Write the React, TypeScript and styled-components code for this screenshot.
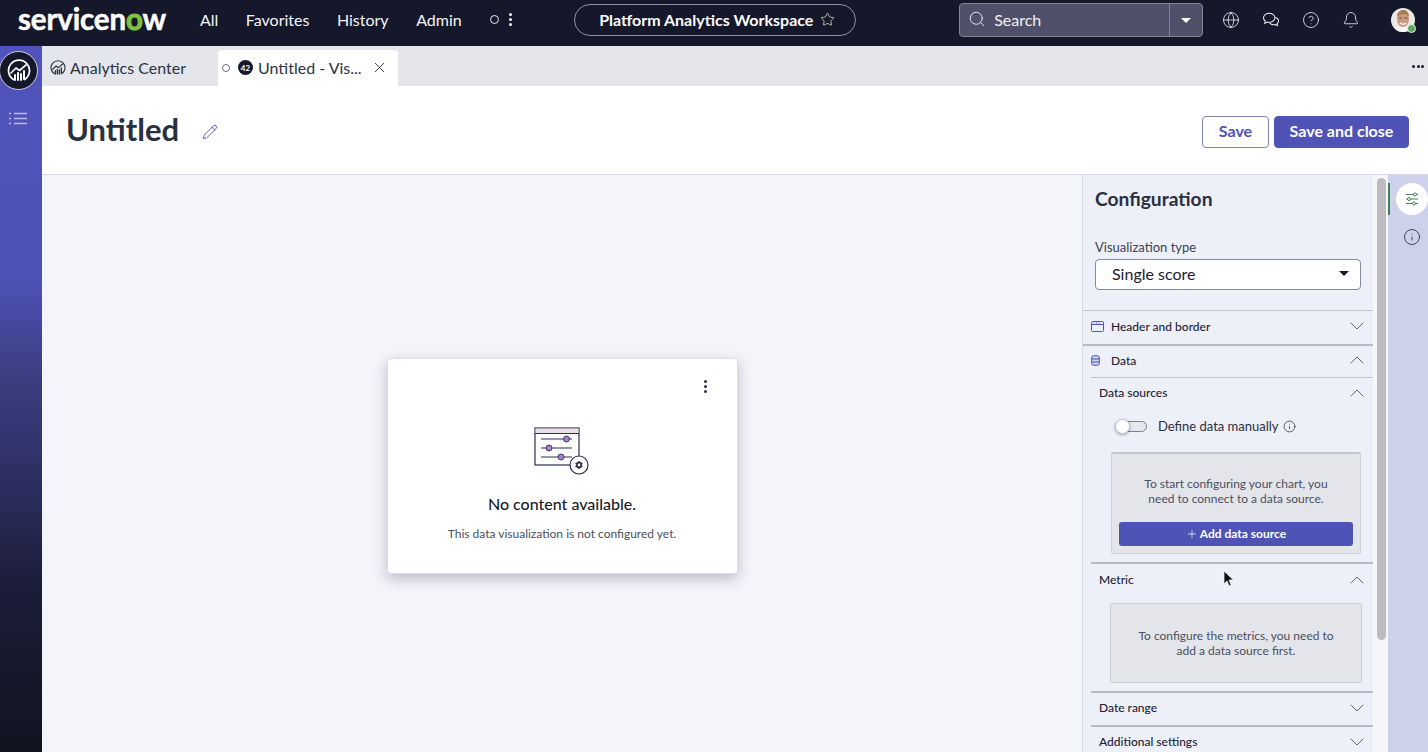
import React from "react";
import styled, { createGlobalStyle } from "styled-components";
import { Search, Globe, CircleHelp, Bell, Star, Pencil, X, ChevronDown, ChevronUp, Info, Plus } from "lucide-react";

const Global = createGlobalStyle`
  html, body { margin: 0; padding: 0; height: 752px; overflow: hidden; }
  body { font-family: Lato, "Open Sans", sans-serif; color: #1c2030; }
  #root { height: 752px; }
  * { box-sizing: border-box; }
`;

const Page = styled.div`
  position: relative;
  width: 1428px;
  height: 752px;
  display: flex;
  flex-direction: column;
  overflow: hidden;
`;

const TopBar = styled.header`
  flex: 0 0 46px;
  height: 46px;
  background: #15172a;
  display: flex;
  align-items: center;
  color: #fff;
`;

const Logo = styled.div`
  margin-left: 18px;
  width: 149px;
  font-size: 29.5px;
  font-weight: 700;
  line-height: 38px;
  letter-spacing: -0.15px;
  color: #fff;
  white-space: nowrap;
  margin-top: -9px;
  -webkit-text-stroke: 0.5px currentColor;
`;
const LogoO = styled.span`
  color: #7ec242;
  -webkit-text-stroke: 1px #7ec242;
`;

const Nav = styled.nav`
  margin-left: 33px;
  display: flex;
  align-items: center;
  gap: 27.5px;
  font-size: 16px;
  margin-top: -7px;
`;
const NavItem = styled.span`
  color: #f4f4f6;
`;
const Ring = styled.span`
  width: 9px;
  height: 9px;
  border: 1.2px solid #eee;
  border-radius: 50%;
`;
const Kebab = styled.span<{ $c: string }>`
  display: flex;
  flex-direction: column;
  gap: 2px;
  & > i {
    width: 3px;
    height: 3px;
    border-radius: 50%;
    background: ${(p) => p.$c};
  }
`;
const NavMore = styled.span`
  display: flex;
  align-items: center;
  gap: 10px;
  margin-left: 1px;
`;

const Pill = styled.div`
  margin-left: 62px;
  width: 282px;
  height: 32px;
  border: 1px solid #8f91a0;
  border-radius: 16px;
  display: flex;
  align-items: center;
  padding: 0 0 2px 24px;
  gap: 7px;
  font-size: 16px;
  font-weight: 700;
  margin-top: -6px;
  color: #fbfbfb;
`;

const SearchBox = styled.div`
  margin-left: 103px;
  width: 244px;
  height: 34px;
  margin-top: -6px;
  background: #50506a;
  border: 1px solid #83849a;
  border-radius: 4px;
  display: flex;
  align-items: center;
  font-size: 16px;
  color: #f0f0f3;
`;
const SearchField = styled.div`
  flex: 1;
  height: 100%;
  display: flex;
  align-items: center;
  gap: 8px;
  padding: 0 0 2px 8px;
  border-right: 1px solid #83849a;
`;
const SearchCaret = styled.div`
  width: 32px;
  display: flex;
  justify-content: center;
`;
const CaretDown = styled.span<{ $w: number; $c: string }>`
  width: 0;
  height: 0;
  border-left: ${(p) => p.$w}px solid transparent;
  border-right: ${(p) => p.$w}px solid transparent;
  border-top: ${(p) => p.$w}px solid ${(p) => p.$c};
`;

const TopIcons = styled.div`
  margin-left: 19px;
  display: flex;
  align-items: center;
  gap: 22px;
  margin-top: -6px;
  color: #eceef2;
`;
const Avatar = styled.div`
  position: relative;
  width: 24px;
  height: 24px;
  margin-left: 31px;
  margin-top: -6px;
`;
const Presence = styled.span`
  position: absolute;
  right: -1px;
  bottom: -1px;
  width: 9px;
  height: 9px;
  border-radius: 50%;
  background: #5ba85a;
  border: 1px solid #e8efe4;
`;

const Body = styled.div`
  flex: 1;
  display: flex;
  min-height: 0;
`;
const Sidebar = styled.aside`
  flex: 0 0 42px;
  background: linear-gradient(180deg, #4f53bb 0%, #4f53b8 32%, #3b3d80 47%, #2a2c5c 64%, #1c1d3a 76%, #12131f 100%);
  position: relative;
  display: flex;
  flex-direction: column;
  align-items: center;
`;
const AppBadge = styled.div`
  position: absolute;
  left: -1px;
  top: 5px;
  width: 39px;
  height: 39px;
  border-radius: 50%;
  background: #15172a;
  border: 1px solid #cfd0e0;
  display: flex;
  align-items: center;
  justify-content: center;
`;
const MenuList = styled.div`
  margin-top: 66px;
  margin-left: -6px;
  line-height: 0;
`;

const Main = styled.main`
  flex: 1;
  display: flex;
  flex-direction: column;
  min-width: 0;
`;
const Tabs = styled.div`
  flex: 0 0 40px;
  background: #e4e6ec;
  display: flex;
  align-items: flex-end;
  font-size: 16px;
`;
const TabHome = styled.div`
  width: 176px;
  height: 36px;
  padding: 0 0 1px 8px;
  display: flex;
  align-items: center;
  gap: 4px;
  color: #2c3242;
`;
const TabActive = styled.div`
  width: 180px;
  height: 36px;
  background: #fff;
  border-radius: 4px 4px 0 0;
  padding: 0 0 1px 4px;
  display: flex;
  align-items: center;
  color: #2c3242;
`;
const TabRing = styled.span`
  width: 8px;
  height: 8px;
  border: 1px solid #666b7a;
  border-radius: 50%;
  margin-right: 8px;
`;
const TabBadge = styled.span`
  width: 15px;
  height: 15px;
  border-radius: 50%;
  background: #15172a;
  color: #fff;
  font-size: 8px;
  font-weight: 700;
  display: flex;
  align-items: center;
  justify-content: center;
  margin-right: 5px;
`;
const TabClose = styled.span`
  margin-left: 9px;
  display: flex;
  color: #2c3242;
`;
const TabsEnd = styled.div`
  margin-left: auto;
  height: 100%;
  display: flex;
  align-items: center;
  padding-right: 4px;
`;
const KebabRow = styled.span`
  display: flex;
  gap: 1.5px;
  & > i {
    width: 3px;
    height: 3px;
    border-radius: 50%;
    background: #15172a;
  }
`;

const TitleBar = styled.div`
  flex: 0 0 89px;
  background: #fff;
  border-bottom: 1px solid #d9dbe8;
  display: flex;
  align-items: center;
  padding: 0 19px 0 24px;
`;
const Title = styled.h1`
  margin: -2px 0 0;
  font-size: 31px;
  font-weight: 700;
  color: #293042;
  line-height: 40px;
`;
const EditIcon = styled.span`
  display: flex;
  margin-left: 23px;
  color: #4e53b5;
  margin-top: 3px;
`;
const Actions = styled.div`
  margin-left: auto;
  display: flex;
  gap: 5px;
  margin-top: 3px;
`;
const Btn = styled.button<{ $primary?: boolean }>`
  height: 32px;
  border-radius: 4px;
  font-family: inherit;
  font-size: 16px;
  font-weight: 700;
  padding: 0 0 2px;
  width: ${(p) => (p.$primary ? "135px" : "67px")};
  background: ${(p) => (p.$primary ? "#4e53b5" : "#fff")};
  color: ${(p) => (p.$primary ? "#fff" : "#4e53b5")};
  border: 1px solid ${(p) => (p.$primary ? "#4e53b5" : "#8486ad")};
`;

const Work = styled.div`
  flex: 1;
  display: flex;
  min-height: 0;
`;
const Canvas = styled.section`
  flex: 0 0 1040px;
  background: #f4f5fa;
  display: flex;
  justify-content: center;
  padding-top: 183px;
`;
const Card = styled.div`
  position: relative;
  width: 351px;
  height: 216px;
  background: #fff;
  border: 1px solid #dcdde6;
  border-radius: 4px;
  box-shadow: 0 5px 14px rgba(40, 44, 70, 0.28);
  display: flex;
  flex-direction: column;
  align-items: center;
  padding-top: 68px;
`;
const CardMenu = styled.div`
  position: absolute;
  right: 30px;
  top: 21px;
`;
const CardTitle = styled.div`
  margin-top: 17px;
  font-size: 16px;
  line-height: 22px;
  font-weight: 500;
  color: #191c2a;
`;
const CardText = styled.div`
  margin-top: 10px;
  font-size: 12px;
  line-height: 18px;
  color: #4a4f60;
`;

const Config = styled.section`
  flex: 0 0 291px;
  background: #edeff9;
  border-left: 1px solid #d6d8e2;
  overflow: hidden;
`;
const ConfigTitle = styled.h2`
  margin: 0;
  padding: 10px 0 0 12px;
  font-size: 19.2px;
  line-height: 28px;
  font-weight: 700;
  color: #293042;
`;
const FieldLabel = styled.div`
  margin: 26px 0 0 12px;
  font-size: 13px;
  line-height: 17px;
  color: #3d4253;
`;
const Select = styled.div`
  margin: 3px 0 0 12px;
  width: 266px;
  height: 31px;
  background: #fff;
  border: 1px solid #878a98;
  border-radius: 4px;
  display: flex;
  align-items: center;
  justify-content: space-between;
  padding: 0 11px 2px 16px;
  font-size: 16px;
  color: #1c2030;
`;
const Row = styled.div<{ $indent?: boolean; $heavy?: boolean; $h?: number; $first?: boolean; $pb?: number }>`
  height: ${(p) => p.$h ?? 34}px;
  display: flex;
  align-items: center;
  margin-left: ${(p) => (p.$indent ? 8 : 0)}px;
  padding: 0 4px ${(p) => p.$pb ?? 3}px 8px;
  border-top: ${(p) => (p.$heavy ? "2px solid #b7bac6" : "1px solid #c2c5d0")};
  font-size: 12px;
  color: #1f2333;
  font-weight: 500;
  margin-top: ${(p) => (p.$first ? 20 : 0)}px;
  white-space: nowrap;
`;
const RowIcon = styled.span`
  width: 20px;
  display: flex;
  color: #5154b4;
`;
const RowChevron = styled.span`
  margin-left: auto;
  display: flex;
  color: #3c4050;
`;
const ToggleRow = styled.div`
  height: 28px;
  margin: 2px 0 0 32px;
  display: flex;
  align-items: center;
  font-size: 13px;
  color: #2a2e3e;
  gap: 4px;
`;
const Toggle = styled.span`
  position: relative;
  width: 32px;
  height: 11px;
  border: 1px solid #7c7f8e;
  border-radius: 6px;
  background: #e6e8f0;
  margin-right: 7px;
`;
const Knob = styled.span`
  position: absolute;
  left: -1px;
  top: -3px;
  width: 15px;
  height: 15px;
  border-radius: 50%;
  background: #fff;
  border: 1px solid #c6c8d2;
  box-shadow: 0 1px 3px rgba(0, 0, 0, 0.35);
`;
const EmptyBox = styled.div<{ $h: number; $x: number; $w: number; $mt: number; $pt: number; $strong?: boolean }>`
  height: ${(p) => p.$h}px;
  width: ${(p) => p.$w}px;
  margin: ${(p) => p.$mt}px 0 0 ${(p) => p.$x}px;
  padding-top: ${(p) => p.$pt}px;
  background: #e4e5ea;
  border: 1px solid #cfd1d8;
  border-top: ${(p) => (p.$strong ? "2px solid #c3c5ce" : "1px solid #cfd1d8")};
  border-radius: 2px;
  text-align: center;
  font-size: 12px;
  line-height: 15px;
  color: #4a4f60;
`;
const AddBtn = styled.div`
  margin: 16px 7px 0;
  height: 24px;
  border-radius: 3px;
  background: #4e53b5;
  color: #fff;
  font-size: 12px;
  font-weight: 700;
  display: flex;
  align-items: center;
  justify-content: center;
  gap: 2px;
  padding-bottom: 1px;
`;
const Spacer = styled.div<{ $h: number }>`
  height: ${(p) => p.$h}px;
`;

const ScrollTrack = styled.div`
  flex: 0 0 15px;
  background: #f6f6f9;
  padding: 3px 2px 0 4px;
`;
const ScrollThumb = styled.div`
  height: 462px;
  border-radius: 5px;
  background: #bcbcc0;
`;

const Rail = styled.aside`
  flex: 1;
  background: #cdd1ea;
  position: relative;
  display: flex;
  flex-direction: column;
  align-items: center;
  padding-top: 8px;
  gap: 9px;
  color: #2a2e3e;
`;
const RailMark = styled.span`
  position: absolute;
  left: 0;
  top: 8px;
  width: 2px;
  height: 32px;
  background: #3f7f5c;
`;
const RailActive = styled.span`
  width: 32px;
  height: 32px;
  border-radius: 50%;
  background: #fff;
  margin-left: 8px;
  display: flex;
  align-items: center;
  justify-content: center;
  color: #3f8a52;
`;
const RailIcon = styled.span`
  display: flex;
  margin-left: 8px;
  margin-top: 4px;
`;
const Cursor = styled.svg`
  position: absolute;
  left: 1223px;
  top: 570px;
`;

const Dots = ({ c }: { c: string }) => (
  <Kebab $c={c}>
    <i />
    <i />
    <i />
  </Kebab>
);

const AnalyticsGlyph = ({ size, color }: { size: number; color: string }) => (
  <svg width={size} height={size} viewBox="0 0 24 24" fill="none" stroke={color} strokeWidth="1.7" strokeLinecap="round" strokeLinejoin="round">
    <path d="M6.5 20.5A10.5 10.5 0 1 1 17.5 20.5" />
    <path d="M4 14l5-5 3.5 2.5L19 6" />
    <path d="M8 21v-5M11 21v-7M14 21v-6M17 20v-8" strokeWidth="2" />
  </svg>
);

const ChatGlyph = () => (
  <svg width="18" height="18" viewBox="0 0 16 16" fill="none" stroke="currentColor" strokeWidth="0.9">
    <path d="M6.5 2C3.6 2 1.3 3.700 1.300 6c0 1.200.6 2.200 1.600 2.900L2.400 11l2.400-1.200c.6.2 1.100.2 1.700.2 2.800 0 5-1.800 5-4s-2.200-4-5-4z" />
    <path d="M11.800 5.800c1.700.4 2.900 1.600 2.900 3 0 1-.5 1.800-1.300 2.400l.4 1.800-2-1c-.5.1-1 .2-1.500.2-1.600 0-3-.8-3.600-2" />
  </svg>
);

const FaceGlyph = () => (
  <svg width="24" height="24" viewBox="0 0 24 24">
    <defs>
      <clipPath id="faceClip">
        <circle cx="12" cy="12" r="12" />
      </clipPath>
    </defs>
    <g clipPath="url(#faceClip)">
      <rect width="24" height="24" fill="#ece9e3" />
      <path d="M2 24c1-5 5-6 10-6s9 1 10 6z" fill="#f7f7f5" />
      <ellipse cx="12" cy="11.500" rx="6" ry="7.500" fill="#c99a80" />
      <path d="M6 9c0-5 3-7 6.500-7S18 5 18 8.500c-2-2-3-2.500-5.500-2.500S8 7 6 9z" fill="#a67c52" />
      <path d="M8 10h3M13.500 10h3" stroke="#5a4030" strokeWidth="0.9" />
      <path d="M9 15c2 1.500 4.500 1.500 6 0" stroke="#fff" strokeWidth="1.200" fill="none" />
    </g>
  </svg>
);

const ListGlyph = () => (
  <svg width="18" height="13" viewBox="0 0 18 13" fill="none" stroke="#b9bce8" strokeWidth="1.400">
    <path d="M5 1.500h13M5 6.500h13M5 11.500h13" />
    <path d="M0 1.500h2M0 6.500h2M0 11.500h2" />
  </svg>
);

const SlidersGlyph = () => (
  <svg width="16" height="16" viewBox="0 0 16 16" fill="none" stroke="currentColor" strokeWidth="1">
    <path d="M2 3.500h7.500M12.500 3.500H14M2 8h1.500M6.500 8H14M2 12.500h6.500M11.500 12.500H14" />
    <circle cx="11" cy="3.500" r="1.500" />
    <circle cx="5" cy="8" r="1.500" />
    <circle cx="10" cy="12.500" r="1.500" />
  </svg>
);

const HeaderGlyph = () => (
  <svg width="13" height="11" viewBox="0 0 13 11" fill="none" stroke="currentColor" strokeWidth="1">
    <rect x="0.500" y="0.500" width="12" height="10" rx="1" />
    <path d="M0.500 3.500h12M2.500 2h1M5 2h1M7.500 2h1" />
  </svg>
);

const DbGlyph = () => (
  <svg width="9" height="11" viewBox="0 0 9 11" fill="#cfd0ee" stroke="currentColor" strokeWidth="1">
    <rect x="0.700" y="0.700" width="7.600" height="9.600" rx="2" />
    <path d="M0.700 4h7.600M0.700 7h7.600" />
  </svg>
);

const EmptyIllustration = () => (
  <svg width="56" height="49" viewBox="0 0 56 49" fill="none">
    <rect x="1" y="1" width="44" height="37" fill="#fff" stroke="#2d3050" strokeWidth="1.200" />
    <rect x="1.600" y="1.600" width="42.800" height="4.500" fill="#eadfe6" />
    <path d="M1 6.500h44" stroke="#2d3050" />
    <path d="M7 12h31M7 21h31M7 30h31" stroke="#2d3050" strokeWidth="1.200" />
    <g fill="#a97fd0" stroke="#2d3050" strokeWidth="0.900">
      <circle cx="32.500" cy="12" r="3" />
      <circle cx="15" cy="21" r="3" />
      <circle cx="27" cy="30" r="3" />
    </g>
    <circle cx="45" cy="38" r="9" fill="#fff" stroke="#2d3050" strokeWidth="1.200" />
    <circle cx="45" cy="38" r="2.300" fill="none" stroke="#2d3050" strokeWidth="1.800" />
    <path d="M45 34v1M45 41v1M41.500 36l.9.500M47.600 39.500l.9.500M41.500 40l.9-.500M47.600 36.500l.9-.500" stroke="#2d3050" strokeWidth="1.400" />
  </svg>
);

const Chev = ({ up }: { up?: boolean }) => (
  <RowChevron>{up ? <ChevronUp size={24} strokeWidth={0.8} /> : <ChevronDown size={24} strokeWidth={0.8} />}</RowChevron>
);

export default function App() {
  return (
    <Page>
      <Global />
      <TopBar>
        <Logo>
          servicen<LogoO>o</LogoO>w
        </Logo>
        <Nav>
          <NavItem>All</NavItem>
          <NavItem>Favorites</NavItem>
          <NavItem>History</NavItem>
          <NavItem>Admin</NavItem>
          <NavMore>
            <Ring />
            <Dots c="#f4f4f6" />
          </NavMore>
        </Nav>
        <Pill>
          Platform Analytics Workspace
          <Star size={15} strokeWidth={1.200} color="#f0e6d2" />
        </Pill>
        <SearchBox>
          <SearchField>
            <Search size={18} strokeWidth={1.200} />
            Search
          </SearchField>
          <SearchCaret>
            <CaretDown $w={5.500} $c="#fff" />
          </SearchCaret>
        </SearchBox>
        <TopIcons>
          <Globe size={18} strokeWidth={1.100} />
          <ChatGlyph />
          <CircleHelp size={18} strokeWidth={1.100} />
          <Bell size={18} strokeWidth={1.100} />
        </TopIcons>
        <Avatar>
          <FaceGlyph />
          <Presence />
        </Avatar>
      </TopBar>
      <Body>
        <Sidebar>
          <AppBadge>
            <AnalyticsGlyph size={24} color="#fff" />
          </AppBadge>
          <MenuList>
            <ListGlyph />
          </MenuList>
        </Sidebar>
        <Main>
          <Tabs>
            <TabHome>
              <AnalyticsGlyph size={16} color="#2c3242" />
              Analytics Center
            </TabHome>
            <TabActive>
              <TabRing />
              <TabBadge>42</TabBadge>
              Untitled - Vis...
              <TabClose>
                <X size={17} strokeWidth={1.300} />
              </TabClose>
            </TabActive>
            <TabsEnd>
              <KebabRow>
                <i />
                <i />
                <i />
              </KebabRow>
            </TabsEnd>
          </Tabs>
          <TitleBar>
            <Title>Untitled</Title>
            <EditIcon>
              <Pencil size={16} strokeWidth={1.400} />
            </EditIcon>
            <Actions>
              <Btn>Save</Btn>
              <Btn $primary>Save and close</Btn>
            </Actions>
          </TitleBar>
          <Work>
            <Canvas>
              <Card>
                <CardMenu>
                  <Dots c="#2d3050" />
                </CardMenu>
                <EmptyIllustration />
                <CardTitle>No content available.</CardTitle>
                <CardText>This data visualization is not configured yet.</CardText>
              </Card>
            </Canvas>
            <Config>
              <ConfigTitle>Configuration</ConfigTitle>
              <FieldLabel>Visualization type</FieldLabel>
              <Select>
                Single score
                <CaretDown $w={5} $c="#15172a" />
              </Select>
              <Row $first>
                <RowIcon>
                  <HeaderGlyph />
                </RowIcon>
                Header and border
                <Chev />
              </Row>
              <Row $heavy $h={33}>
                <RowIcon>
                  <DbGlyph />
                </RowIcon>
                Data
                <Chev up />
              </Row>
              <Row $indent $h={33}>
                Data sources
                <Chev up />
              </Row>
              <ToggleRow>
                <Toggle>
                  <Knob />
                </Toggle>
                Define data manually
                <Info size={13} strokeWidth={1.400} />
              </ToggleRow>
              <EmptyBox $h={102} $w={250} $x={28} $mt={12} $pt={22} $strong>
                To start configuring your chart, you
                <br />
                need to connect to a data source.
                <AddBtn>
                  <Plus size={12} strokeWidth={1.400} />
                  Add data source
                </AddBtn>
              </EmptyBox>
              <Spacer $h={8} />
              <Row $indent $heavy $h={41} $pb={8}>
                Metric
                <Chev up />
              </Row>
              <EmptyBox $h={80} $w={252} $x={27} $mt={0} $pt={24}>
                To configure the metrics, you need to
                <br />
                add a data source first.
              </EmptyBox>
              <Spacer $h={8} />
              <Row $indent $heavy>
                Date range
                <Chev />
              </Row>
              <Row $indent $heavy>
                Additional settings
                <Chev />
              </Row>
            </Config>
            <ScrollTrack>
              <ScrollThumb />
            </ScrollTrack>
            <Rail>
              <RailMark />
              <RailActive>
                <SlidersGlyph />
              </RailActive>
              <RailIcon>
                <Info size={18} strokeWidth={1.100} />
              </RailIcon>
            </Rail>
          </Work>
        </Main>
      </Body>
      <Cursor width="12" height="18" viewBox="0 0 12 18">
        <path d="M1 1v13l3-3 2.200 5 2-1-2.200-5h4.500z" fill="#111" stroke="#fff" strokeWidth="0.700" />
      </Cursor>
    </Page>
  );
}
